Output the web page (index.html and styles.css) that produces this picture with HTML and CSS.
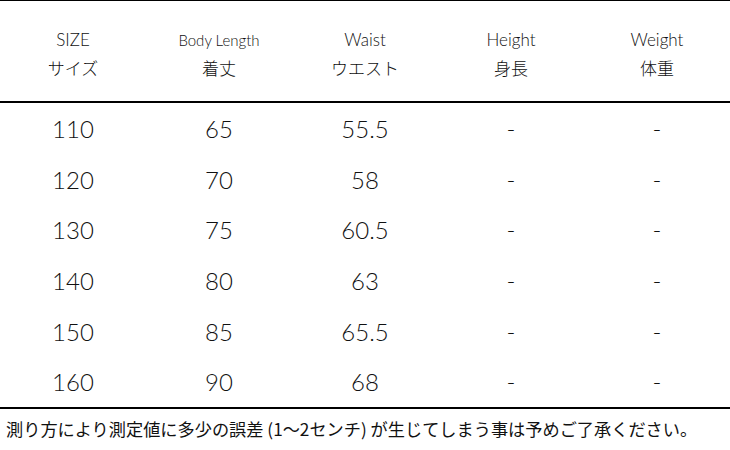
FILE: index.html
```html
<!DOCTYPE html>
<html lang="ja">
<head>
<meta charset="utf-8">
<link rel="stylesheet" href="styles.css">
</head>
<body>
<div class="chart">
  <div class="head">
    <div class="hcell"><span class="en">SIZE</span><span class="ja">サイズ</span></div>
    <div class="hcell"><span class="en small">Body Length</span><span class="ja">着丈</span></div>
    <div class="hcell"><span class="en">Waist</span><span class="ja">ウエスト</span></div>
    <div class="hcell"><span class="en">Height</span><span class="ja">身長</span></div>
    <div class="hcell"><span class="en">Weight</span><span class="ja">体重</span></div>
  </div>
  <div class="body">
    <div class="row"><span>110</span><span>65</span><span>55.5</span><span>-</span><span>-</span></div>
    <div class="row"><span>120</span><span>70</span><span>58</span><span>-</span><span>-</span></div>
    <div class="row"><span>130</span><span>75</span><span>60.5</span><span>-</span><span>-</span></div>
    <div class="row"><span>140</span><span>80</span><span>63</span><span>-</span><span>-</span></div>
    <div class="row"><span>150</span><span>85</span><span>65.5</span><span>-</span><span>-</span></div>
    <div class="row"><span>160</span><span>90</span><span>68</span><span>-</span><span>-</span></div>
  </div>
  <p class="note">測り方により測定値に多少の誤差 (1〜2センチ) が生じてしまう事は予めご了承ください。</p>
</div>
</body>
</html>
```
FILE: styles.css
```css
html, body {
  margin: 0;
  padding: 0;
  background: #fff;
}
.chart {
  width: 730px;
  height: 450px;
  color: #111;
  font-family: "Lato", "Noto Sans CJK JP", sans-serif;
}
.head {
  display: grid;
  grid-template-columns: repeat(5, 146px);
  height: 100px;
  border-top: 1px solid #000;
  border-bottom: 2px solid #000;
}
.hcell {
  display: flex;
  flex-direction: column;
  align-items: center;
  justify-content: center;
  gap: 6px;
  padding-top: 5px;
}
.en {
  font-size: 17px;
  line-height: 22px;
  font-weight: 300;
  color: #111;
}
.en.small {
  font-size: 15px;
}
.ja {
  font-family: "Noto Sans CJK JP", sans-serif;
  font-size: 17px;
  line-height: 22px;
  font-weight: 300;
}
.body {
  border-bottom: 2px solid #000;
}
.row {
  display: grid;
  grid-template-columns: repeat(5, 146px);
  height: 50.7px;
  align-items: center;
  font-size: 24px;
  font-weight: 300;
}
.row span {
  text-align: center;
}
.note {
  margin: 0;
  padding: 9px 0 0 6px;
  font-family: "Noto Sans CJK JP", sans-serif;
  font-size: 17.2px;
  line-height: 22px;
  color: #111;
  white-space: nowrap;
}
```
